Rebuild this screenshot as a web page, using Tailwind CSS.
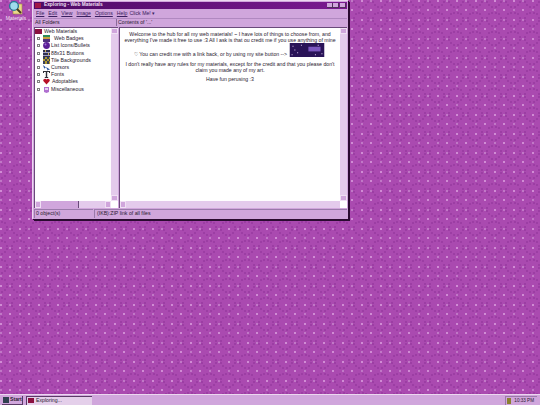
<!DOCTYPE html>
<html lang="en">
<head>
  <meta charset="UTF-8" />
  <title>Exploring - Web Materials</title>
  <script src="https://cdn.jsdelivr.net/npm/@tailwindcss/browser@4"></script>
</head>
<body class="w-[540px] h-[405px] overflow-hidden relative bg-[#a445aa] font-['Liberation_Sans',sans-serif] text-[#2a1a30]">

  <!-- wallpaper -->
  <svg class="absolute inset-0" width="540" height="405">
    <defs>
      <pattern id="tile" width="19" height="19" patternUnits="userSpaceOnUse">
        <rect width="19" height="19" fill="#aa4ab0" />
        <path d="M4 4h2v2H4zM13 4h2v2h-2zM4 13h2v2H4zM13 13h2v2h-2zM1 6h2v2H1zM6 1h2v2H6zM16 6h2v2h-2zM11 1h2v2h-2zM1 12h2v2H1zM6 17h2v2H6zM16 12h2v2h-2zM11 17h2v2h-2z" fill="#9c3ea4" />
        <path d="M9 9h2v2H9zM0 0h2v2H0z" fill="#d08cd4" />
        <path d="M9 0h2v2H9zM0 9h2v2H0z" fill="#c078c6" />
      </pattern>
    </defs>
    <rect width="540" height="405" fill="url(#tile)" />
  </svg>

  <!-- desktop icon -->
  <div class="absolute left-[3px] top-px w-[26px] flex flex-col items-center">
    <svg width="16" height="14" viewBox="0 0 16 14">
      <path d="M5 3h9v10H5z" fill="#ecd98a" stroke="#a08a40" stroke-width=".6" />
      <circle cx="6" cy="5" r="4.4" fill="#9fdcec" stroke="#2c7a96" stroke-width="1.4" />
      <path d="M9 8l4 4" stroke="#4a3a20" stroke-width="2" />
    </svg>
    <span class="text-[5px] leading-[7px] text-[#f4e4f6]">Materials</span>
  </div>

  <!-- explorer window -->
  <div class="absolute left-[32px] top-0 w-[316px] h-[219px] bg-[#d0a6dc] border-t border-l border-[#ecd8f0] shadow-[1px_1px_0_#2a0a30,2px_2px_0_#2a0a30] flex flex-col p-px text-[5.2px]">
    <div class="h-[7px] bg-gradient-to-r from-[#4e0a66] to-[#7a1a90] flex items-center pl-px shrink-0">
      <svg width="6" height="5" viewBox="0 0 6 5"><rect width="6" height="5" fill="#a01848" /></svg>
      <span class="ml-[3px] text-[4.8px] font-bold leading-none text-[#f0e0f4]">Exploring - Web Materials</span>
      <div class="ml-auto flex pr-px">
        <span class="w-[6px] h-[5px] bg-[#d0a6dc] border-r border-b border-[#50305a]"></span>
        <span class="w-[6px] h-[5px] bg-[#d0a6dc] border-r border-b border-[#50305a]"></span>
        <span class="w-[6px] h-[5px] ml-px bg-[#d0a6dc] border-r border-b border-[#50305a]"></span>
      </div>
    </div>
    <div class="h-[9px] flex items-center gap-[4px] pl-[2px] leading-none shrink-0 text-[#3a2060]">
      <span class="underline">File</span><span class="underline">Edit</span><span class="underline">View</span><span class="underline">Image</span><span class="underline">Options</span><span class="underline">Help</span><span class="-ml-[2px]">Click Me! ▾</span>
    </div>
    <div class="h-[8px] flex leading-none shrink-0 border-t border-[#b088c0]">
      <div class="w-[83px] flex items-center pl-px border-r border-[#8a6a9a]">All Folders</div>
      <div class="flex-1 flex items-center pl-px">Contents of '...'</div>
    </div>
    <div class="flex-1 flex min-h-0 gap-[1px] mt-px">
      <!-- folder tree -->
      <div class="w-[84px] bg-white border-t border-l border-[#6a4a7a] flex">
        <div class="flex-1 flex flex-col min-w-0">
          <div class="flex-1 leading-[7.2px] whitespace-nowrap">
            <div class="flex items-center h-[7.2px]"><span class="w-[7px] h-[5px] bg-[#8a1040]"></span><span class="ml-[2px]">Web Materials</span></div>
            <div class="flex items-center h-[7.2px] pl-[2px] gap-[3px]">
              <span class="w-[3px] h-[3px] border border-[#808080]"></span>
              <svg width="7" height="7" viewBox="0 0 7 7"><path d="M0 0h7v2H0z" fill="#2f8a5a" /><path d="M0 2h7v2H0z" fill="#c8a040" /><path d="M0 4h7v3H0z" fill="#503080" /></svg>
              <span class="ml-[1px]">Web Badges</span>
            </div>
            <div class="flex items-center h-[7.2px] pl-[2px] gap-[3px]">
              <span class="w-[3px] h-[3px] border border-[#808080]"></span>
              <svg class="-mr-[2px]" width="7" height="7" viewBox="0 0 7 7"><circle cx="3.5" cy="3.5" r="3.4" fill="#5a1e96" /><circle cx="2.5" cy="2.5" r="1" fill="#a070d8" /></svg>
              <span>List Icons/Bullets</span>
            </div>
            <div class="flex items-center h-[7.2px] pl-[2px] gap-[3px]">
              <span class="w-[3px] h-[3px] border border-[#808080]"></span>
              <svg class="-mr-[2px]" width="7" height="7" viewBox="0 0 7 7"><rect width="7" height="7" fill="#303050" /><path d="M0 2h7v1H0zM0 5h7v1H0z" fill="#a0a0c8" /><path d="M2 0h1v2H2zM5 3h1v2H5z" fill="#d0b050" /></svg>
              <span>88x31 Buttons</span>
            </div>
            <div class="flex items-center h-[7.2px] pl-[2px] gap-[3px]">
              <span class="w-[3px] h-[3px] border border-[#808080]"></span>
              <svg class="-mr-[2px]" width="7" height="7" viewBox="0 0 7 7"><rect width="7" height="7" fill="#b09a30" /><path d="M0 0h2v2H0zM4 0h2v2H4zM2 2h2v2H2zM6 2h1v2H6zM0 4h2v3H0zM4 4h2v3H4z" fill="#384058" /></svg>
              <span>Tile Backgrounds</span>
            </div>
            <div class="flex items-center h-[7.2px] pl-[2px] gap-[3px]">
              <span class="w-[3px] h-[3px] border border-[#808080]"></span>
              <svg class="-mr-[2px]" width="7" height="7" viewBox="0 0 7 7"><path d="M0 1l3 2.5-1.500 .5 0 1.500zM3 3l4 2.500-2 .5 0 1z" fill="#2050a0" /></svg>
              <span>Cursors</span>
            </div>
            <div class="flex items-center h-[7.2px] pl-[2px] gap-[3px]">
              <span class="w-[3px] h-[3px] border border-[#808080]"></span>
              <svg class="-mr-[2px]" width="7" height="7" viewBox="0 0 7 7"><path d="M0 0h7v2H6V1H4.200v5H5.200v1H1.800V6h1V1H1v1H0z" fill="#303038" /></svg>
              <span>Fonts</span>
            </div>
            <div class="flex items-center h-[7.2px] pl-[2px] gap-[3px]">
              <span class="w-[3px] h-[3px] border border-[#808080]"></span>
              <svg class="-mr-[2px]" width="7" height="7" viewBox="0 0 7 7"><path d="M3.500 6.500L.3 3A1.800 1.800 0 0 1 3.500 1.500A1.800 1.800 0 0 1 6.700 3z" fill="#b81028" /></svg>
              <span class="ml-px">Adoptables</span>
            </div>
            <div class="flex items-center h-[7.2px] pl-[2px] gap-[3px]">
              <span class="w-[3px] h-[3px] border border-[#808080]"></span>
              <svg class="-mr-[2px]" width="7" height="7" viewBox="0 0 7 7"><path d="M1 1h5v5l-2.500 1L1 6z" fill="#b070d0" /><path d="M2 2h3v2H2z" fill="#e8d0f0" /></svg>
              <span>Miscellaneous</span>
            </div>
          </div>
          <div class="h-[7px] bg-[#e4cbec] flex items-center">
            <span class="w-[6px] h-[7px] bg-[#d0a6dc] border border-[#f0e0f4]"></span>
            <span class="w-[38px] h-[7px] bg-[#d0a6dc] border-r border-[#6a4a7a]"></span>
            <span class="ml-auto w-[6px] h-[7px] bg-[#d0a6dc] border border-[#f0e0f4]"></span>
          </div>
        </div>
        <div class="w-[7px] bg-[#e4cbec] flex flex-col justify-between mb-[7px]">
          <span class="h-[6px] bg-[#d0a6dc] border border-[#f0e0f4]"></span>
          <span class="h-[6px] bg-[#d0a6dc] border border-[#f0e0f4]"></span>
        </div>
      </div>
      <!-- contents pane -->
      <div class="flex-1 bg-white border-t border-l border-[#6a4a7a] flex min-w-0">
        <div class="flex-1 flex flex-col min-w-0">
          <div class="flex-1 pt-[3px] text-center leading-[6px] whitespace-nowrap">
            <p>Welcome to the hub for all my web materials! ~ I have lots of things to choose from, and<br />everything I've made it free to use :3 All I ask is that ou credit me if you use anything of mine</p>
            <div class="flex items-end justify-center h-[14px]">
              <span>♡ You can credit me with a link back, or by using my site button --&gt;</span>
              <svg class="ml-px" width="38" height="14" viewBox="0 0 37 15">
                <rect width="37" height="15" fill="#2a1458" />
                <path d="M3 3h1v1H3zM8 10h1v1H8zM5 7h1v1H5zM30 2h1v1h-1zM34 11h1v1h-1zM27 12h1v1h-1zM2 12h1v1H2zM12 2h1v1h-1z" fill="#e8d0f8" />
                <path d="M15 2a6 6 0 1 0 8 10a6 6 0 0 1-8-10z" fill="#e8b838" />
                <rect x="20" y="4" width="13" height="5" fill="#7c58c0" />
              </svg>
            </div>
            <p class="mt-[4px]">I don't really have any rules for my materials, except for the credit and that you please don't<br />claim you made any of my art.</p>
            <p class="mt-[3px]">Have fun perusing :3</p>
          </div>
          <div class="h-[7px] bg-[#e4cbec]"><span class="block w-[6px] h-[7px] bg-[#d0a6dc] border border-[#f0e0f4]"></span></div>
        </div>
        <div class="w-[7px] bg-[#e4cbec] flex flex-col justify-between mb-[7px]">
          <span class="h-[6px] bg-[#d0a6dc] border border-[#f0e0f4]"></span>
          <span class="h-[6px] bg-[#d0a6dc] border border-[#f0e0f4]"></span>
        </div>
      </div>
    </div>
    <div class="h-[10px] flex leading-none pt-px gap-px shrink-0">
      <div class="w-[59px] flex items-center pl-px border-t border-l border-[#9a7aaa]">0 object(s)</div>
      <div class="flex-1 flex items-center pl-[2px] border-t border-l border-[#9a7aaa]">(IKB):ZIP link of all files</div>
    </div>
  </div>

  <!-- taskbar -->
  <div class="absolute left-0 bottom-0 w-[540px] h-[11px] bg-[#d0a6dc] border-t border-[#ecd8f0] flex items-center text-[5.2px] leading-none">
    <div class="ml-[2px] w-[21px] h-[9px] border-r border-b border-[#5a3a66] flex items-center gap-px pl-px font-bold">
      <span class="w-[6px] h-[6px] bg-[#304050]"></span>Start
    </div>
    <div class="ml-[3px] w-[66px] h-[9px] bg-[#e4cfea] border-t border-l border-[#5a3a66] flex items-center gap-[2px] pl-px">
      <span class="w-[6px] h-[5px] bg-[#8a1040]"></span>Exploring...
    </div>
    <div class="ml-auto mr-[3px] w-[32px] h-[9px] border-t border-l border-[#9a7aaa] flex items-center justify-between px-px pt-px text-[4.6px]">
      <span class="w-[4px] h-[6px] bg-[#8a8030]"></span><span class="mr-[2px]">10:33 PM</span>
    </div>
  </div>
</body>
</html>
